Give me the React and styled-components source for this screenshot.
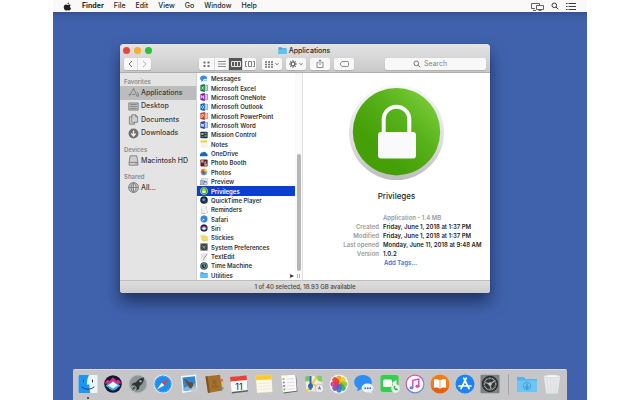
import React from "react";
import styled, { createGlobalStyle, css } from "styled-components";

const GlobalStyle = createGlobalStyle`
  *, *::before, *::after { box-sizing: border-box; }
  body { margin: 0; background: #fff; font-family: Inter, "Liberation Sans", sans-serif; color: #262626; }
  button, input { font: inherit; color: inherit; margin: 0; padding: 0; border: 0; background: none; }
  ul, dl, dd, h1, h2 { margin: 0; padding: 0; font: inherit; list-style: none; }
  a { color: inherit; text-decoration: none; }
  svg { display: block; flex: none; }
`;

/* ---------- artwork ---------- */

const Office = ({ color, dark, letter }) => (
  <>
    <rect x="9" y="3" width="10" height="14" fill="#fff" stroke={color} strokeWidth="1.5" />
    <path d="M12 7h5M12 10h5M12 13h5" stroke={color} strokeWidth="1.5" />
    <path d="M1 2.5L12 0v20L1 17.500z" fill={dark} />
    <path d={letter} fill="none" stroke="#fff" strokeWidth="1.8" />
  </>
);

const Compass = () => (
  <>
    <circle cx="10" cy="10" r="9.500" fill="#e4e8ee" />
    <circle cx="10" cy="10" r="8.600" fill="#1f8cf0" />
    <circle cx="10" cy="10" r="7.600" fill="none" stroke="#a8d8ff" strokeWidth=".8" strokeDasharray=".5 1.2" />
    <path d="M16 4.500L8.700 8.700 11.300 11.300z" fill="#f0402c" />
    <path d="M4 15.500L8.700 8.700 11.300 11.300z" fill="#fff" />
  </>
);

const petals = ["#f79a1b", "#f0cc12", "#8fc62c", "#35a868", "#3577cc", "#7a4dae", "#cf3590", "#ea3a2a"];

const art = {
  finder: (
    <>
      <rect x=".5" y="1" width="19" height="18" rx="1" fill="#eef4fb" />
      <path d="M1.500 1h9.500c-1.500 3-2.200 6-2.200 9.500h2.600c-.1 3 .2 6 .9 8.500H1.500a1 1 0 0 1-1-1V2a1 1 0 0 1 1-1z" fill="#1c96f3" />
      <path d="M5.500 6v2M14.500 6v2M4 13c3.500 3 8.500 3 12 0" fill="none" stroke="#16426e" strokeWidth="1" strokeLinecap="round" />
    </>
  ),
  siri: (
    <>
      <circle cx="10" cy="10" r="9.500" fill="#ccc" />
      <circle cx="10" cy="10" r="8.800" fill="#1b1535" />
      <path d="M2 9.500c2-6 4-2 5-3s2-3 3-3 2 2 3 3 3-3 5 3c-3 0-5 1.500-8 1.500s-5-1.500-8-1.500z" fill="#d22f86" />
      <path d="M2.500 12c3-4 5-1 7.500-5 2.500 4 4.500 1 7.500 5-3 1-4.500 4.500-7.500 4.500S5.500 13 2.500 12z" fill="#36a9ef" />
      <path d="M5 11.500l5-4 5 4-5 3z" fill="#e9fbff" />
    </>
  ),
  rocket: (
    <>
      <circle cx="10" cy="10" r="9.500" fill="#b8bdbf" />
      <circle cx="10" cy="10" r="8.500" fill="#8f9696" />
      <path d="M16 3.500c-4 .2-6.200 2-8 4.800L5 9l-1.500 2.500 3-.3 2.200 2.200-.4 3L11 15l.6-3C14.500 10 16 7.500 16 3.500z" fill="#2f3537" />
      <path d="M6 12.500l-2.500 4 4-2.500z" fill="#3c4244" />
      <circle cx="12.500" cy="7.200" r="1.200" fill="#9aa" />
    </>
  ),
  safari: <Compass />,
  mail: (
    <>
      <path d="M2 2l15-1.500 1.500 16L3.500 19z" fill="#f4f6f8" />
      <path d="M3.500 3.500l12.500-1.300 1.300 13-12.500 1.800z" fill="#2f86d2" />
      <path d="M4.500 14l12-5 .8 6.200-12.500 1.800z" fill="#72b8e8" />
      <path d="M5 5c3 .5 4 2 5 3.500 2-1 4 0 4.500 1.500L13 15l-3-1.500L7.500 9z" fill="#6b4a32" />
      <circle cx="15.500" cy="16" r="3.500" fill="#c2ccd3" fillOpacity=".8" />
    </>
  ),
  contacts: (
    <>
      <path d="M1.500 2.500L16 .8l2.500 15.700L4 19z" fill="#a3702d" />
      <path d="M1.500 2.500l2-.3L6 18.600l-2 .4z" fill="#80531f" />
      <path d="M17 5l1.500-.2.5 2.600-1.600.3z" fill="#e95a3c" />
      <path d="M17.600 9l1.500-.2.4 2.600-1.500.3z" fill="#f4c13a" />
      <path d="M18 13l1.500-.2.4 2.300-1.500.3z" fill="#59a9dc" />
      <circle cx="10.500" cy="8" r="2.200" fill="#94642a" />
      <path d="M7.500 14c.5-4 6-4.500 7-1z" fill="#94642a" />
    </>
  ),
  calendar: (
    <>
      <path d="M1 3l16.500-1.500L19 17.500 3 19.500z" fill="#5d5f61" />
      <path d="M1 3l16.500-1.500L18.700 16 2.500 18z" fill="#fafafa" />
      <path d="M1 3l16.500-1.500.4 4.500L1.400 7.500z" fill="#e6423b" />
      <text x="10" y="15.500" textAnchor="middle" fontSize="9" fill="#222">11</text>
    </>
  ),
  notes: (
    <>
      <path d="M1.500 1.500L17.500 1l1 17-15.500 1z" fill="#fbf8ec" stroke="#d8cfa8" strokeWidth=".4" />
      <path d="M1.500 1.500L17.500 1l.3 4.500L1.800 6z" fill="#fcc929" />
      <path d="M4 9.500l12-.6M4.300 12.500l12-.6M4.500 15.500l12-.6" stroke="#e3dfd1" strokeWidth=".6" />
    </>
  ),
  reminders: (
    <>
      <path d="M2.500 2L17 1l1.500 16.500L4.500 19.500z" fill="#5d6064" />
      <path d="M2 1.500L16.500.8l1.300 16L4 18.500z" fill="#fbfbfb" />
      <circle cx="4.500" cy="5" r="1.100" fill="#f39a2b" />
      <circle cx="4.800" cy="8.500" r="1.100" fill="#4a9af0" />
      <circle cx="5.100" cy="12" r="1.100" fill="#c05bd8" />
      <circle cx="5.400" cy="15.300" r="1.100" fill="#6dc94a" />
      <path d="M7.500 5l7.500-.3M7.700 8.500l7.500-.4M7.900 12l7.500-.5M8.100 15.200l7.500-.6" stroke="#c5c8ca" strokeWidth=".6" />
    </>
  ),
  maps: (
    <>
      <path d="M1 2.500l6-1 5.500 1L18 1.500 19 17l-6 1-5-1-5.500 1z" fill="#f0ead8" />
      <path d="M1 2.500l4.500-.8.5 5-4.600 1z" fill="#71c562" />
      <path d="M11 2.200L18 1.500l.4 6.500-4-1z" fill="#7ccf68" />
      <path d="M13 2.500L2.500 18M7 9l11 6" stroke="#f7c53b" strokeWidth="1.800" />
      <path d="M6.500 2v14" stroke="#2868c8" strokeWidth="2" />
      <circle cx="6.500" cy="12" r="2.500" fill="#2868c8" />
      <circle cx="15.500" cy="14.500" r="4.300" fill="#e9edf0" stroke="#a6adb3" strokeWidth=".6" />
      <path d="M15.500 11.800l1.700 4-1.700-.8-1.700.8z" fill="#6c7a88" />
    </>
  ),
  photos: (
    <>
      <circle cx="10" cy="10" r="9.500" fill="#f7f7f7" />
      {petals.map((c, i) => (
        <rect key={c} x="7.400" y="1.500" width="5.200" height="8.200" rx="2.600" fill={c} fillOpacity=".9" transform={`rotate(${i * 45} 10 10)`} />
      ))}
    </>
  ),
  messages: (
    <>
      <path d="M9 1c5 0 8.800 3 8.800 7.200S14 15.500 9 15.500c-.8 0-1.500 0-2.200-.2C5.500 16.500 4 17 2.500 17c1-1 1.300-2 1.200-3C1.500 12.700.2 10.600.2 8.200.2 4 4 1 9 1z" fill="#2c8df5" />
      <path d="M13.500 9.500c3.300 0 6 2 6 4.600 0 1.500-.8 2.800-2.200 3.600 0 .7.300 1.200.7 1.600-1 0-1.900-.4-2.600-1-4.500.7-7.800-1.500-7.800-4.200 0-2.600 2.600-4.600 5.900-4.600z" fill="#e9f4ff" />
      <path d="M10.500 13.500h1.600v1.500h-1.600zM13 13.500h1.600v1.500H13zM15.500 13.500H17v1.500h-1.500z" fill="#286bc0" />
    </>
  ),
  facetime: (
    <>
      <rect x=".5" y="1" width="18" height="17" rx="2.500" fill="#32d04d" />
      <rect x="3" y="5.500" width="9" height="7.500" rx="1.500" fill="#fff" />
      <path d="M12.500 8.500l4-2.500v7l-4-2.500z" fill="#fff" />
      <circle cx="15.500" cy="14.500" r="4.300" fill="#eef9ef" />
      <path d="M13.500 12.500c0 2.500 1.800 4 4 4l.3-1.500-1.400-.8-.7.600-1-1.200.6-.7-.7-1.400z" fill="#22ae3d" />
    </>
  ),
  music: (
    <>
      <defs>
        <linearGradient id="ring" x1="0" y1="0" x2="1" y2="1">
          <stop offset="0" stopColor="#ef5ba1" />
          <stop offset=".5" stopColor="#a458e0" />
          <stop offset="1" stopColor="#35b3f4" />
        </linearGradient>
      </defs>
      <circle cx="10" cy="10" r="8.900" fill="#fdfdfd" stroke="url(#ring)" strokeWidth="1.200" />
      <path d="M7.800 13.500V6.300l6-1.300v7" fill="none" stroke="#d14ac0" strokeWidth="1.400" />
      <ellipse cx="6.500" cy="13.800" rx="2" ry="1.500" fill="#3f8fee" />
      <ellipse cx="12.500" cy="12.300" rx="2" ry="1.500" fill="#e8488c" />
    </>
  ),
  books: (
    <>
      <circle cx="10" cy="10" r="9.500" fill="#f47b16" />
      <path d="M1.500 14A9.500 9.500 0 0 0 18.500 14z" fill="#e75f10" />
      <path d="M10 6.500C8 5 5.800 5 4 5.500v8.200c2-.5 4.200-.4 6 1 1.800-1.400 4-1.500 6-1V5.500c-1.800-.5-4-.5-6 1z" fill="#fff" />
      <path d="M10 6.500v8" stroke="#ef8230" strokeWidth=".7" />
    </>
  ),
  store: (
    <>
      <circle cx="10" cy="10" r="9.500" fill="#1b83f3" />
      <path d="M11.300 4.200L6 14.500M8.700 4.200L14 14.500M4 12h12" stroke="#fff" strokeWidth="1.700" strokeLinecap="round" />
    </>
  ),
  prefs: (
    <>
      <rect x=".5" y=".8" width="19" height="18.500" rx="1" fill="#7d8184" />
      <circle cx="10" cy="10" r="8.200" fill="#2b2e30" />
      <circle cx="10" cy="10" r="5.800" fill="#34383a" stroke="#a9adaf" strokeWidth="1.500" strokeDasharray="1 .5" />
      <path d="M10 10L5 8.500M10 10l4.500-3M10 10l1 5" stroke="#b4b8ba" strokeWidth="1.200" />
      <circle cx="10" cy="10" r="1.800" fill="#c5c8ca" />
    </>
  ),
  downloads: (
    <>
      <path d="M0 3h7l1.500 2H20v13H0z" fill="#55b5e8" />
      <path d="M0 6.500h20V18H0z" fill="#6cc6f3" />
      <circle cx="10" cy="12" r="3.800" fill="none" stroke="#48a3d6" />
      <path d="M10 9.500v4.500M8 12.300l2 2 2-2" fill="none" stroke="#3b98cc" strokeWidth="1.200" />
    </>
  ),
  trash: (
    <>
      <path d="M1.800 2h16.400L15.800 19.500H4.200z" fill="#e6e8e9" />
      <path d="M5 5l1.500 14M8.500 4.500l.5 14M12 4.500l-.5 14M15 5l-1.500 14" stroke="#d6d9da" strokeWidth=".7" />
      <ellipse cx="10" cy="2.200" rx="8.200" ry="1.500" fill="#f5f6f6" stroke="#c5c8ca" strokeWidth=".5" />
    </>
  ),
  excel: <Office color="#1f9a55" dark="#12793f" letter="M4 6l5 8M9 6l-5 8" />,
  onenote: <Office color="#9b3fb5" dark="#7d1f9c" letter="M4 14V6l5 8V6" />,
  outlook: <Office color="#3a8ddb" dark="#0c69bd" letter="M6.500 6.500a2.500 3.500 0 1 0 .1 0z" />,
  powerpoint: <Office color="#e0593a" dark="#cf3a1d" letter="M4.500 15V6h2.500a2 2.500 0 0 1 0 5H5" />,
  word: <Office color="#3d6cbd" dark="#21499c" letter="M3 6l2 8 1.500-6L8 14l2-8" />,
  mission: (
    <>
      <rect x="1" y="2" width="18" height="16" rx="1" fill="#222838" />
      <path d="M3 5h6v5H3z" fill="#d4a52b" />
      <path d="M11 4h6v4h-6z" fill="#4a83d8" />
      <path d="M4 12h5v4H4z" fill="#3d75c9" />
      <path d="M11 10h6v5h-6z" fill="#3aa54c" />
    </>
  ),
  onedrive: <path d="M1 15.500a3.500 3.500 0 0 1 1-6.500 4 4 0 0 1 5-3 5.500 5.500 0 0 1 9 3 3.500 3.500 0 0 1 1.500 6.500z" fill="#1667c4" />,
  booth: (
    <>
      <rect x="1" y="1" width="18" height="18" rx="2" fill="#6d2a2a" />
      <path d="M3 3h6v6H3zM11 11h6v6h-6z" fill="#d7a9a0" />
      <path d="M11 3h6v6h-6zM3 11h6v6H3z" fill="#3d2430" />
      <circle cx="13" cy="8" r="2" fill="#e9d9ce" />
    </>
  ),
  preview: (
    <>
      <rect x="4" y="1" width="14" height="11" fill="#dce9f4" stroke="#9ab" />
      <path d="M5 11l4-6 4 4 2-2 3 4z" fill="#3b78c2" />
      <rect x="1" y="6" width="9" height="11" fill="#a9b9cd" stroke="#70839c" />
      <circle cx="14" cy="14" r="4" fill="#d8e3ea" stroke="#747c88" strokeWidth="1.500" />
    </>
  ),
  privileges: (
    <>
      <circle cx="10" cy="10" r="9.500" fill="#dfe8d8" />
      <circle cx="10" cy="10" r="8.500" fill="#53ab12" />
      <path d="M7.500 10V7a2.500 2.500 0 0 1 5 0v3" fill="none" stroke="#fff" strokeWidth="1.500" />
      <rect x="6" y="9.500" width="8" height="5.500" fill="#fff" />
    </>
  ),
  quicktime: (
    <>
      <circle cx="10" cy="10" r="9.500" fill="#23282f" />
      <circle cx="9.500" cy="9.500" r="5" fill="#4a9be8" stroke="#121820" strokeWidth="2" />
      <path d="M12 12l6 6" stroke="#3d4856" strokeWidth="3" />
    </>
  ),
  stickies: (
    <>
      <path d="M1 4l11-2 3 10-11 3z" fill="#f7ef9a" stroke="#cdbb58" strokeWidth=".8" />
      <path d="M6 7l12-1 1 11-12 1z" fill="#f3dc65" stroke="#c7ae42" strokeWidth=".8" />
    </>
  ),
  textedit: (
    <>
      <path d="M3 2h12v17H3z" fill="#f8f8f8" stroke="#b5b5b5" strokeWidth="1" />
      <path d="M5 6h8M5 9h8M5 12h6" stroke="#bbb" />
      <path d="M18 1L8 16l-1 2 2-1L19 2z" fill="#6c6f73" />
    </>
  ),
  timemachine: (
    <>
      <circle cx="10" cy="10" r="9.500" fill="#34564f" />
      <circle cx="10" cy="10" r="6.500" fill="#1e2c48" stroke="#6fc5b0" strokeWidth="1.500" />
      <path d="M10 5.500V10l3.500 2" fill="none" stroke="#fff" strokeWidth="1.500" />
    </>
  ),
  folder: (
    <>
      <path d="M1 3h7l1.500 2H19v12H1z" fill="#3ea5e4" />
      <path d="M1 7h18v10.500H1z" fill="#63c0f5" />
    </>
  ),
};

const Art = ({ name, size }) => (
  <svg width={size} height={size} viewBox="0 0 20 20" aria-hidden="true">{art[name]}</svg>
);

const lineArt = {
  apps: (
    <path d="M2.500 17L9.500 3.500h1L15 13M4.500 13.500H1M7.500 13.500h6M11 2.500l-1.500 2.500M16 10.500c1-.5 3 0 3 2v4.500M15.500 13.500v3h3" />
  ),
  desktop: <path fill="#c2c2c2" d="M1.500 3.500h17v13h-17zM4 6.500h12M4 10h12M4 13.500h12" />,
  documents: <path fill="#cfcfcf" d="M7 1.500h7l3.500 3.500v10H7zM14 1.500V5h3.500M7 5H2.500v13.500h9.500V15" />,
  disk: <path fill="#cfcfcf" d="M4 1.500h12l2 12v5H2v-5zM2 13.500h16M13.500 16H16" />,
  globe: <path fill="#c2c2c2" d="M10 1a9 9 0 1 0 .1 0zM10 1v18M1 10h18M10 1c-6 5-6 13 0 18M10 1c6 5 6 13 0 18" />,
};

const SideIcon = ({ name }) => (
  <svg width="11" height="11" viewBox="0 0 20 20" fill="none" stroke="#7c7c7c" strokeWidth="1.6" aria-hidden="true">
    {name === "download" ? (
      <>
        <circle cx="10" cy="10" r="9" fill="#6f6f6f" stroke="none" />
        <path d="M10 4.500v9M6 10l4 4.500 4-4.500" stroke="#f0f0f0" strokeWidth="2.500" />
      </>
    ) : lineArt[name]}
  </svg>
);

/* ---------- layout ---------- */

const Page = styled.div`
  display: flex;
  min-height: 100vh;
  padding: 0 53px;
  background: #fff;
`;

const Desktop = styled.div`
  flex: 1;
  display: flex;
  flex-direction: column;
  min-width: 0;
  background: #4062ad;
`;

const MenuBar = styled.nav`
  display: flex;
  align-items: center;
  height: 12px;
  padding: 0 11px 0 10px;
  gap: 10px;
  background: #f9f9f9;
  font-size: 7px;
  line-height: 12px;
`;

const MenuItem = styled.button`
  font-weight: ${(p) => (p.$bold ? 700 : 500)};
`;

const MenuExtras = styled.div`
  display: flex;
  align-items: center;
  gap: 7px;
  margin-left: auto;
  color: #3c3c3c;
`;

const Workspace = styled.div`
  flex: 1;
  padding: 32px 97px 0 67px;
  background: linear-gradient(#34508f, #3c5ca3 4px, #4062ad 12px);
`;

const Window = styled.main`
  display: flex;
  flex-direction: column;
  border-radius: 4px 4px 3px 3px;
  overflow: hidden;
  background: #fff;
  box-shadow: 0 9px 16px rgba(10, 20, 50, 0.6), 0 0 1px rgba(0, 0, 0, 0.6);
`;

const WindowHeader = styled.header`
  height: 29px;
  background: linear-gradient(#e4e4e4, #c9c9c9);
  border-bottom: 1px solid #aeaeae;
`;

const TitleBar = styled.div`
  display: grid;
  grid-template-columns: 1fr auto 1fr;
  align-items: center;
  height: 13px;
  padding: 0 5px 0 3px;
`;

const Lights = styled.div`
  display: flex;
  gap: 4px;
`;

const Light = styled.button`
  width: 7px;
  height: 7px;
  border-radius: 50%;
  background: ${(p) => p.$color};
`;

const Title = styled.h1`
  display: flex;
  align-items: center;
  gap: 2px;
  font-size: 7px;
  line-height: 9px;
  font-weight: 500;
`;

const Toolbar = styled.div`
  display: flex;
  align-items: center;
  height: 13px;
  padding: 0 4px;
  gap: 4px;
`;

const Segments = styled.div`
  display: flex;
  height: 12px;
  border-radius: 2px;
  overflow: hidden;
  background: #f8f8f8;
  box-shadow: 0 1px 1px #b0b0b0;
  margin: ${(p) => (p.$views ? "0 2px 0 44px" : "0")};
`;

const ToolButton = styled.button`
  display: flex;
  align-items: center;
  justify-content: center;
  gap: 2px;
  width: ${(p) => p.$width}px;
  height: 12px;
  color: #707070;
  & + & { border-left: 1px solid #dadada; }
  ${(p) => p.$active && css`
    background: #565656;
    color: #e6e6e6;
  `}
`;

const SearchField = styled.label`
  display: flex;
  align-items: center;
  width: 101px;
  height: 12px;
  margin-left: auto;
  padding-left: 28px;
  gap: 3px;
  border-radius: 2px;
  background: #f8f8f8;
  box-shadow: 0 1px 1px #b0b0b0;
  color: #777;
`;

const SearchInput = styled.input`
  flex: 1;
  min-width: 0;
  font-size: 7px;
  line-height: 10px;
  outline: none;
  &::placeholder { color: #858585; opacity: 1; }
`;

const Body = styled.div`
  display: grid;
  grid-template-columns: 77px 106px 1fr;
  min-height: 207px;
`;

const Sidebar = styled.aside`
  background: #e4e4e4;
  border-right: 1px solid #d2d2d2;
  padding-top: 4px;
`;

const SideHeading = styled.h2`
  padding-left: 4px;
  font-size: 6px;
  line-height: 9px;
  font-weight: 600;
  color: #8a8a8a;
`;

const SideGroup = styled.ul`
  display: grid;
  grid-auto-rows: 1fr;
  height: ${(p) => p.$height}px;
  margin-bottom: 5px;
`;

const SideLink = styled.a`
  display: flex;
  align-items: center;
  gap: 2px;
  height: 100%;
  padding-left: 8px;
  font-size: 7px;
  line-height: 12px;
  font-weight: 500;
  color: #3a3a3a;
  background: ${(p) => (p.$active ? "#bcbcbc" : "transparent")};
`;

const FileColumn = styled.section`
  display: grid;
  grid-template-columns: 1fr 7px;
  border-right: 1px solid #e4e4e4;
`;

const FileList = styled.ul`
  display: grid;
  grid-auto-rows: 1fr;
  padding-top: 1px;
`;

const FileRow = styled.button`
  display: flex;
  align-items: center;
  gap: 3px;
  width: 100%;
  height: 100%;
  padding: 0 1px 0 3px;
  font-size: 6px;
  line-height: 9px;
  font-weight: 600;
  text-align: left;
  white-space: nowrap;
  color: ${(p) => (p.$active ? "#fff" : "#333")};
  background: ${(p) => (p.$active ? "#0c3fd0" : "transparent")};
`;

const Arrow = styled.span`
  margin-left: auto;
  font-family: "DejaVu Sans", sans-serif;
  font-size: 8px;
  color: #444;
`;

const ScrollTrack = styled.div`
  display: flex;
  flex-direction: column;
  justify-content: flex-end;
  align-items: center;
  gap: 3px;
  padding-bottom: 2px;
  background: #fafafa;
`;

const Thumb = styled.div`
  width: 4px;
  height: 57%;
  border-radius: 2px;
  background: #b6b6b6;
`;

const Grip = styled.div`
  width: 3px;
  height: 4px;
  border: solid #b5b5b5;
  border-width: 0 1px;
`;

const Preview = styled.section`
  display: flex;
  flex-direction: column;
  align-items: center;
  padding-top: 9px;
`;

const PreviewName = styled.h2`
  margin: 8px 0 11px;
  font-size: 8px;
  line-height: 12px;
  font-weight: 500;
`;

const Meta = styled.dl`
  display: grid;
  grid-template-columns: 76px 1fr;
  column-gap: 4px;
  width: 100%;
  font-size: 6px;
  line-height: 9px;
  font-weight: 600;
  white-space: nowrap;
`;

const MetaLabel = styled.dt`
  text-align: right;
  color: #9a9a9a;
`;

const MetaValue = styled.dd`
  color: ${(p) => (p.$muted ? "#9a9a9a" : "#262626")};
`;

const TagLink = styled.a`
  padding-left: 1px;
  color: #2c7be0;
`;

const StatusBar = styled.footer`
  height: 13px;
  border-top: 1px solid #bcbcbc;
  background: linear-gradient(#dedede, #cdcdcd);
  font-size: 6px;
  line-height: 12px;
  font-weight: 500;
  text-align: center;
  color: #444;
`;

const Dock = styled.footer`
  display: flex;
  align-items: flex-start;
  height: 31px;
  margin: 0 20px;
  padding: 4px 5px 0;
  background: #c6c6c8;
  border-top: 1px solid #dadade;
  border-radius: 2px 2px 0 0;
`;

const DockApps = styled.div`
  flex: 1;
  display: flex;
  justify-content: space-between;
`;

const DockItem = styled.button`
  display: flex;
  flex-direction: column;
  align-items: center;
  gap: 3px;
`;

const RunningDot = styled.span`
  width: 2px;
  height: 2px;
  border-radius: 50%;
  background: #333;
`;

const DockDivider = styled.div`
  width: 1px;
  height: 21px;
  margin: 0 8px;
  background: #a3a3a6;
`;

const DockPlaces = styled.div`
  display: flex;
  gap: 5px;
`;

/* ---------- data ---------- */

const files = [
  ["messages", "Messages"], ["excel", "Microsoft Excel"], ["onenote", "Microsoft OneNote"],
  ["outlook", "Microsoft Outlook"], ["powerpoint", "Microsoft PowerPoint"], ["word", "Microsoft Word"],
  ["mission", "Mission Control"], ["notes", "Notes"], ["onedrive", "OneDrive"], ["booth", "Photo Booth"],
  ["photos", "Photos"], ["preview", "Preview"], ["privileges", "Privileges"], ["quicktime", "QuickTime Player"],
  ["reminders", "Reminders"], ["safari", "Safari"], ["siri", "Siri"], ["stickies", "Stickies"],
  ["prefs", "System Preferences"], ["textedit", "TextEdit"], ["timemachine", "Time Machine"], ["folder", "Utilities"],
];

const places = [
  { title: "Favorites", height: 54, items: [["apps", "Applications"], ["desktop", "Desktop"], ["documents", "Documents"], ["download", "Downloads"]] },
  { title: "Devices", height: 13, items: [["disk", "Macintosh HD"]] },
  { title: "Shared", height: 13, items: [["globe", "All…"]] },
];

const details = [
  ["", "Application - 1.4 MB"],
  ["Created", "Friday, June 1, 2018 at 1:37 PM"],
  ["Modified", "Friday, June 1, 2018 at 1:37 PM"],
  ["Last opened", "Monday, June 11, 2018 at 9:48 AM"],
  ["Version", "1.0.2"],
];

const dockApps = [
  "finder", "siri", "rocket", "safari", "mail", "contacts", "calendar", "notes", "reminders",
  "maps", "photos", "messages", "facetime", "music", "books", "store", "prefs",
];

/* ---------- toolbar glyphs ---------- */

const Glyph = ({ w = 10, h = 8, children }) => (
  <svg width={w} height={h} viewBox={`0 0 ${w} ${h}`} fill="none" stroke="currentColor" aria-hidden="true">{children}</svg>
);

const Chevron = () => <Glyph w={4} h={4}><path d="M.5 1.200L2 2.800 3.500 1.200" /></Glyph>;

const Magnifier = () => (
  <Glyph w={8} h={8}>
    <circle cx="3.300" cy="3.300" r="2.300" />
    <path d="M5 5l2.300 2.300" />
  </Glyph>
);

const AppleLogo = () => (
  <svg width="9" height="9" viewBox="0 0 24 24" fill="#222" aria-hidden="true">
    <path d="M16.400 1c.1 2.400-2 4.700-4.400 4.700C11.800 3.300 14 1.200 16.400 1zM20.800 8.300c-3.300 2-2.800 6.900.7 8.300-.9 2.700-2.900 6.200-5 6.300-1.700 0-2.200-1-4.200-1s-2.600 1-4.200 1C4.700 22.800 2 17.500 2 13.300c0-4 2.600-6.600 5.600-6.600 1.800 0 3.100 1.100 4.500 1.100s2.600-1.200 4.800-1.200c1.500 0 3 .7 3.900 1.700z" />
  </svg>
);

const PrivilegesBadge = () => (
  <svg width="100" height="100" viewBox="0 0 100 100" role="img" aria-label="Privileges icon">
    <defs>
      <linearGradient id="green" x1=".85" y1=".15" x2=".3" y2=".7">
        <stop offset="0" stopColor="#76c832" />
        <stop offset=".45" stopColor="#57b11a" />
        <stop offset="1" stopColor="#459f06" />
      </linearGradient>
      <linearGradient id="rim" x1="0" y1="0" x2="0" y2="1">
        <stop offset="0" stopColor="#f8f8f8" />
        <stop offset=".6" stopColor="#dedee0" />
        <stop offset="1" stopColor="#bdbdbf" />
      </linearGradient>
    </defs>
    <circle cx="49.500" cy="50.500" r="47.500" fill="url(#rim)" />
    <circle cx="49.500" cy="49.700" r="43.700" fill="url(#green)" />
    <path d="M36.700 52V37.500a12.800 12.800 0 0 1 25.600 0V52" fill="none" stroke="#fff" strokeWidth="4" />
    <rect x="31" y="50" width="38" height="26.500" rx="3" fill="#fafafc" />
  </svg>
);

export default function App() {
  return (
    <Page>
      <GlobalStyle />
      <Desktop>
        <MenuBar aria-label="Menu bar">
          <AppleLogo />
          <MenuItem $bold>Finder</MenuItem>
          {["File", "Edit", "View", "Go", "Window", "Help"].map((m) => <MenuItem key={m}>{m}</MenuItem>)}
          <MenuExtras>
            <Glyph w={13} h={9}>
              <path d="M4 6.500H.5v-5h8V3M2 8.500h3" strokeWidth=".8" />
              <path d="M5.500 3.500h7v4h-7zM7.500 8.500h3" strokeWidth=".8" />
            </Glyph>
            <Magnifier />
            <Glyph w={10} h={8}><path d="M0 1.500h1.500M2.500 1.500h7.500M0 4.500h1.500M2.500 4.500h7.500M0 7.500h1.500M2.500 7.500h7.500" /></Glyph>
          </MenuExtras>
        </MenuBar>

        <Workspace>
          <Window>
            <WindowHeader>
              <TitleBar>
                <Lights>
                  <Light $color="#e8453f" aria-label="Close" />
                  <Light $color="#f5b02e" aria-label="Minimize" />
                  <Light $color="#25c136" aria-label="Zoom" />
                </Lights>
                <Title><Art name="folder" size={9} />Applications</Title>
              </TitleBar>
              <Toolbar>
                <Segments>
                  <ToolButton $width={13} aria-label="Back"><Glyph w={5}><path d="M4 1L1 4l3 3" /></Glyph></ToolButton>
                  <ToolButton $width={14} aria-label="Forward"><Glyph w={5}><path d="M1 1l3 3-3 3" opacity=".5" /></Glyph></ToolButton>
                </Segments>
                <Segments $views>
                  <ToolButton $width={15} aria-label="Icons"><Glyph w={7}><path d="M.5 2.500h2M4.500 2.500h2M.5 6h2M4.500 6h2" strokeWidth="2" /></Glyph></ToolButton>
                  <ToolButton $width={14} aria-label="List"><Glyph w={8}><path d="M0 1.500h8M0 4h8M0 6.500h8" opacity=".8" /></Glyph></ToolButton>
                  <ToolButton $width={14} $active aria-label="Columns"><Glyph w={10}><path d="M.5 1.500h9v5h-9zM3.500 1.500v5M6.500 1.500v5" /></Glyph></ToolButton>
                  <ToolButton $width={14} aria-label="Gallery"><Glyph w={10}><path d="M3.500 1.500h3v5h-3zM2 1.500H.5v5H2M8 1.500h1.500v5H8" strokeWidth=".9" /></Glyph></ToolButton>
                </Segments>
                <Segments>
                  <ToolButton $width={20} aria-label="Group"><Glyph w={8}><path d="M0 2h2M3 2h2M6 2h2M0 4.500h2M3 4.500h2M6 4.500h2M0 7h2M3 7h2M6 7h2" strokeWidth="1.400" /></Glyph><Chevron /></ToolButton>
                </Segments>
                <Segments>
                  <ToolButton $width={20} aria-label="Actions">
                    <Glyph w={8}>
                      <circle cx="4" cy="4" r="2" strokeWidth="1.600" />
                      <path d="M4 0v1.500M4 6.500V8M0 4h1.500M6.500 4H8M1.200 1.200l1 1M5.800 5.800l1 1M6.800 1.200l-1 1M2.200 5.800l-1 1" />
                    </Glyph>
                    <Chevron />
                  </ToolButton>
                </Segments>
                <Segments>
                  <ToolButton $width={20} aria-label="Share"><Glyph w={8} h={9}><path d="M2.500 3.500h-1.500v5h6v-5H5.500M4 6V1M2.500 2.300L4 .8l1.500 1.500" strokeWidth=".8" /></Glyph></ToolButton>
                </Segments>
                <Segments>
                  <ToolButton $width={20} aria-label="Tags"><Glyph w={10}><path d="M1 4l2-2.500h5.500a1 1 0 0 1 1 1v3a1 1 0 0 1-1 1H3z" strokeWidth=".8" /></Glyph></ToolButton>
                </Segments>
                <SearchField>
                  <Magnifier />
                  <SearchInput type="text" placeholder="Search" aria-label="Search" />
                </SearchField>
              </Toolbar>
            </WindowHeader>

            <Body>
              <Sidebar>
                {places.map((g) => (
                  <React.Fragment key={g.title}>
                    <SideHeading>{g.title}</SideHeading>
                    <SideGroup $height={g.height}>
                      {g.items.map(([icon, label]) => (
                        <li key={label}>
                          <SideLink href="#" $active={icon === "apps"}><SideIcon name={icon} />{label}</SideLink>
                        </li>
                      ))}
                    </SideGroup>
                  </React.Fragment>
                ))}
              </Sidebar>

              <FileColumn>
                <FileList>
                  {files.map(([icon, label]) => (
                    <li key={label}>
                      <FileRow $active={icon === "privileges"}>
                        <Art name={icon} size={8} />
                        {label}
                        {icon === "folder" && <Arrow>▸</Arrow>}
                      </FileRow>
                    </li>
                  ))}
                </FileList>
                <ScrollTrack><Thumb /><Grip /></ScrollTrack>
              </FileColumn>

              <Preview>
                <PrivilegesBadge />
                <PreviewName>Privileges</PreviewName>
                <Meta>
                  {details.map(([label, value]) => (
                    <React.Fragment key={label}>
                      <MetaLabel>{label}</MetaLabel>
                      <MetaValue $muted={!label}>{value}</MetaValue>
                    </React.Fragment>
                  ))}
                  <MetaLabel />
                  <MetaValue><TagLink href="#">Add Tags…</TagLink></MetaValue>
                </Meta>
              </Preview>
            </Body>
            <StatusBar>1 of 40 selected, 18.93 GB available</StatusBar>
          </Window>
        </Workspace>

        <Dock>
          <DockApps>
            {dockApps.map((name) => (
              <DockItem key={name} aria-label={name}>
                <Art name={name} size={20} />
                {name === "finder" && <RunningDot />}
              </DockItem>
            ))}
          </DockApps>
          <DockDivider />
          <DockPlaces>
            <DockItem aria-label="downloads"><Art name="downloads" size={20} /></DockItem>
            <DockItem aria-label="trash"><Art name="trash" size={20} /></DockItem>
          </DockPlaces>
        </Dock>
      </Desktop>
    </Page>
  );
}
